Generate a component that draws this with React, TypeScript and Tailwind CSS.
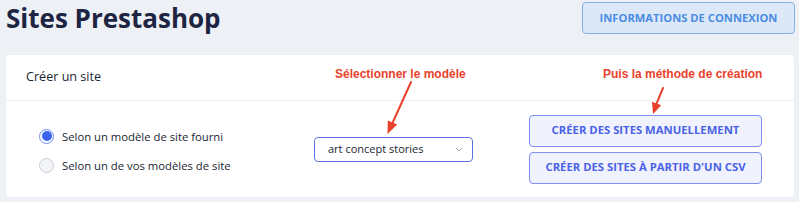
import { useState } from 'react'

const font = { fontFamily: '"Open Sans", "Noto Sans", sans-serif' }

function Radio({ checked, label, onClick }: { checked: boolean; label: string; onClick: () => void }) {
  return (
    <label className="flex items-center gap-[8px] cursor-pointer" onClick={onClick}>
      {checked ? (
        <span className="flex size-[15px] items-center justify-center rounded-full border border-[#6f8ff0] bg-white">
          <span className="size-[10px] rounded-full bg-[#3b63ec]" />
        </span>
      ) : (
        <span className="size-[15px] rounded-full border border-[#c9cdd7] bg-[#f3f4f8]" />
      )}
      <span className="text-[11.3px] leading-[17px] text-[#1a1f33]">{label}</span>
    </label>
  )
}

function Arrows() {
  return (
    <svg className="pointer-events-none absolute left-0 top-0" width="788" height="142" viewBox="0 0 788 142">
      <g stroke="#e8412c" strokeWidth="2" fill="#e8412c" strokeLinecap="round">
        <line x1="405" y1="27" x2="386.5" y2="68" />
        <polygon points="381.5,79 391.2,69.6 381.8,65.4" stroke="none" />
        <line x1="657" y1="33" x2="650.6" y2="48.7" />
        <polygon points="647,59 655.2,50.2 646,46.7" stroke="none" />
      </g>
    </svg>
  )
}

export default function App() {
  const [mode, setMode] = useState<'fourni' | 'vos'>('fourni')

  return (
    <div className="h-[202px] w-[799px] overflow-hidden bg-[#edf0f5] pl-[6px] pr-[4px]" style={font}>
      <div className="flex items-start justify-between">
        <h1 className="text-[26px] font-bold leading-[36px] text-[#1d2542]">Sites Prestashop</h1>
        <button className="mt-[2px] h-[32px] w-[213px] rounded-[4px] border border-[#86b0ea] bg-[#dce8f8] text-[11.2px] font-bold text-[#4a8ce2]">
          INFORMATIONS DE CONNEXION
        </button>
      </div>

      <div className="relative mt-[19px] mr-[1px] rounded-[4px] bg-white shadow-[0_0_1px_rgba(0,0,0,0.06)]">
        <div className="flex h-[46px] items-center border-b border-[#eef0f4] px-[20px]">
          <h2 className="text-[12.6px] text-[#1a1f33]">Créer un site</h2>
        </div>

        <div className="flex h-[96px] items-center pl-[33px]">
          <div className="flex w-[275px] flex-col gap-[12px] pt-[3px]">
            <Radio checked={mode === 'fourni'} label="Selon un modèle de site fourni" onClick={() => setMode('fourni')} />
            <Radio checked={mode === 'vos'} label="Selon un de vos modèles de site" onClick={() => setMode('vos')} />
          </div>

          <div className="flex h-[25px] w-[159px] items-center justify-between rounded-[4px] border border-[#5d72e4] bg-white pl-[13px] pr-[9px]">
            <span className="text-[11px] text-[#1a1f33]">art concept stories</span>
            <svg width="8" height="5" viewBox="0 0 8 5" fill="none">
              <path d="M1 1l3 3 3-3" stroke="#9ba1ae" strokeWidth="1" />
            </svg>
          </div>

          <div className="ml-[56px] flex w-[233px] flex-col gap-[5px]">
            <button className="h-[32px] rounded-[4px] border border-[#7f91ee] bg-[#f0f2fe] text-[11.3px] font-bold text-[#4a62e6]">
              CRÉER DES SITES MANUELLEMENT
            </button>
            <button className="h-[32px] rounded-[4px] border border-[#7f91ee] bg-[#f0f2fe] text-[11.3px] font-bold text-[#4a62e6]">
              CRÉER DES SITES À PARTIR D'UN CSV
            </button>
          </div>
        </div>

        <div
          className="absolute left-[329px] top-[12px] text-[12px] font-bold leading-[14px] text-[#e8412c]"
          style={{ fontFamily: '"Liberation Sans", Arial, sans-serif' }}
        >
          Sélectionner le modèle
        </div>
        <div
          className="absolute left-[597px] top-[12px] text-[12px] font-bold leading-[14px] text-[#e8412c]"
          style={{ fontFamily: '"Liberation Sans", Arial, sans-serif' }}
        >
          Puis la méthode de création
        </div>
        <Arrows />
      </div>
    </div>
  )
}
